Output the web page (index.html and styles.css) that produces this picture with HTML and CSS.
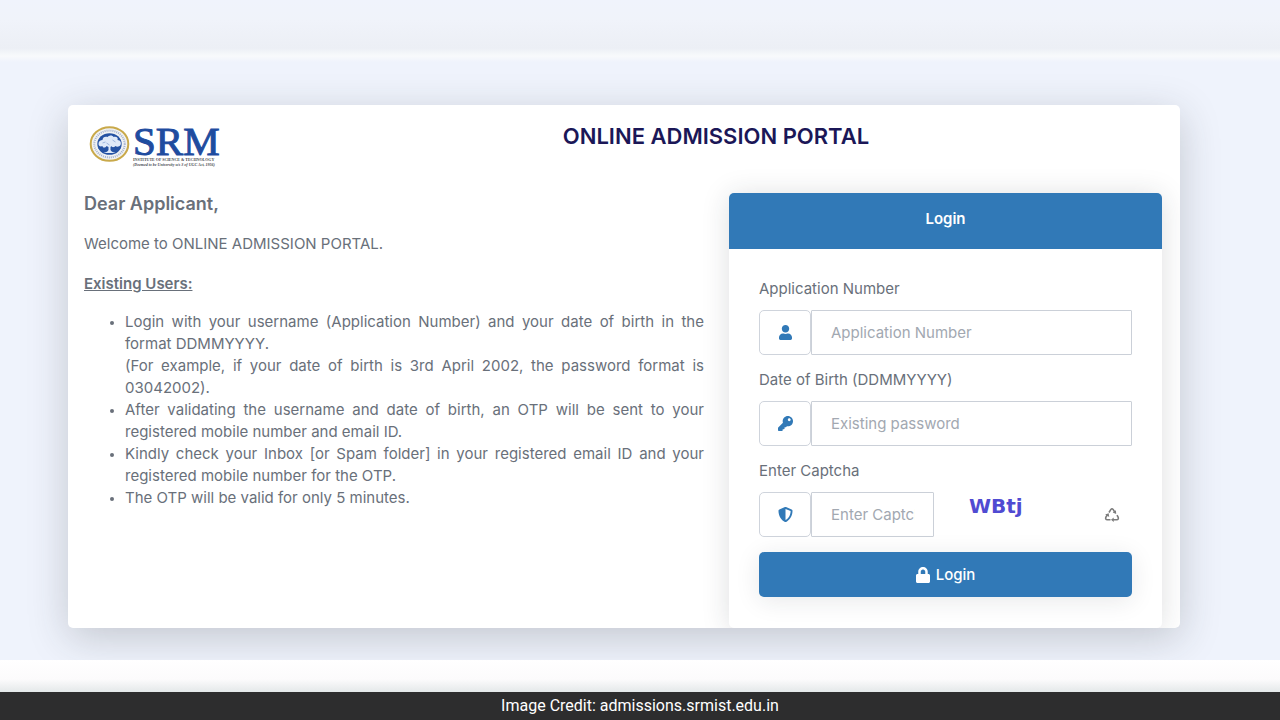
FILE: index.html
```html
<!DOCTYPE html>
<html lang="en">
<head>
    <meta charset="UTF-8">
    <meta name="viewport" content="width=device-width, initial-scale=1.0">
    <title>Online Admission Portal</title>
    <link rel="stylesheet" href="styles.css">
</head>
<body>
<div class="top-strip"></div>
<main class="page">
    <div class="portal">
        <header class="portal-header">
            <div class="logo">
                <svg class="logo-seal" viewBox="0 0 40 36" aria-hidden="true">
                    <ellipse cx="20" cy="18" rx="18.8" ry="16.8" fill="#f1f2f2" stroke="#c9a94a" stroke-width="2"/>
                    <ellipse cx="20" cy="18" rx="15.2" ry="13.4" fill="none" stroke="#a3b1d0" stroke-width="2" stroke-dasharray="1 1"/>
                    <ellipse cx="20" cy="18" rx="12.2" ry="10.8" fill="#2552a3"/>
                    <path d="M9 18c0-3 2-4 4-4 0-3 3-4 5-3 2-2 5-2 6 0 3-1 5 1 4 3 3 0 4 3 3 5-1 2-4 2-5 1-2 2-4 1-4 0l-1 1v3c1 2 3 2 5 3H14c2-1 4-1 5-3v-3l-2-1c-1 2-4 2-4 0-2 1-4 0-4-2z" fill="#dfe9f8"/>
                    <path d="M13 17l3-1m7-2l3 2m-9 1l3 2" fill="none" stroke="#9db5dd" stroke-width="1"/>
                </svg>
                <div class="logo-text">
                    <span class="logo-name">SRM</span>
                    <span class="logo-line">INSTITUTE OF SCIENCE &amp; TECHNOLOGY</span>
                    <span class="logo-line logo-note">(Deemed to be University u/s 3 of UGC Act, 1956)</span>
                </div>
            </div>
            <h1 class="portal-title">ONLINE ADMISSION PORTAL</h1>
        </header>
        <div class="portal-body">
            <section class="info">
                <h2 class="greeting">Dear Applicant,</h2>
                <p class="welcome">Welcome to ONLINE ADMISSION PORTAL.</p>
                <h3 class="info-heading">Existing Users:</h3>
                <ul class="info-list">
                    <li>Login with your username (Application Number) and your date of birth in the format DDMMYYYY.<br>
                        (For example, if your date of birth is 3rd April 2002, the password format is 03042002).</li>
                    <li>After validating the username and date of birth, an OTP will be sent to your registered mobile number and email ID.</li>
                    <li>Kindly check your Inbox [or Spam folder] in your registered email ID and your registered mobile number for the OTP.</li>
                    <li>The OTP will be valid for only 5 minutes.</li>
                </ul>
            </section>
            <section class="login">
                <h2 class="login-header">Login</h2>
                <form class="login-form">
                    <div class="field">
                        <label for="application">Application Number</label>
                        <div class="input-group">
                            <span class="addon">
                                <svg viewBox="0 0 448 512" width="13" height="15" aria-hidden="true"><path fill="currentColor" d="M224 256c70.700 0 128-57.300 128-128S294.700 0 224 0 96 57.300 96 128s57.300 128 128 128zm89.600 32h-16.700c-22.200 10.200-46.900 16-72.900 16s-50.600-5.800-72.900-16h-16.700C60.200 288 0 348.200 0 422.400V464c0 26.500 21.500 48 48 48h352c26.500 0 48-21.500 48-48v-41.600c0-74.200-60.200-134.400-134.400-134.400z"/></svg>
                            </span>
                            <input type="text" id="application" class="input" placeholder="Application Number">
                        </div>
                    </div>
                    <div class="field">
                        <label for="dob">Date of Birth (DDMMYYYY)</label>
                        <div class="input-group">
                            <span class="addon">
                                <svg viewBox="0 0 512 512" width="15" height="15" aria-hidden="true"><path fill="currentColor" d="M512 176c0 97.200-78.800 176-176 176-11.200 0-22.200-1.100-32.800-3.100l-24 27A24 24 0 0 1 261.200 384H224v40c0 13.300-10.700 24-24 24h-40v40c0 13.300-10.700 24-24 24H24c-13.300 0-24-10.700-24-24v-78.100c0-6.400 2.500-12.500 7-17l161.800-161.800C163 213.800 160 195.300 160 176 160 78.800 238.800 0 336 0 433.500 0 512 78.500 512 176zM336 128c0 26.500 21.500 48 48 48s48-21.500 48-48-21.500-48-48-48-48 21.500-48 48z"/></svg>
                            </span>
                            <input type="password" id="dob" class="input" placeholder="Existing password">
                        </div>
                    </div>
                    <div class="field">
                        <label for="captcha">Enter Captcha</label>
                        <div class="captcha-row">
                            <div class="input-group captcha-group">
                                <span class="addon">
                                    <svg viewBox="0 0 512 512" width="15" height="15" aria-hidden="true"><path fill="currentColor" d="M466.500 83.700l-192-80a48 48 0 0 0-36.900 0l-192 80C27.700 91.100 16 108.600 16 128c0 198.500 114.500 335.700 221.500 380.300 11.800 4.900 25.100 4.900 36.900 0C360.100 472.600 496 349.300 496 128c0-19.400-11.700-36.900-29.500-44.300zM256.100 446.300l-.1-381 175.900 73.300c-3.300 151.400-82.100 261.100-175.800 307.700z"/></svg>
                                </span>
                                <input type="text" id="captcha" class="input" placeholder="Enter Captcha">
                            </div>
                            <span class="captcha-code">WBtj</span>
                            <button type="button" class="refresh" aria-label="Refresh captcha">
                                <svg viewBox="0 0 16 16" width="16" height="16" aria-hidden="true">
                                    <path d="M5 5.500L6.900 2.400Q8 1 9.100 2.400L11 5.500M13 8.200l1.200 2.200q.6 2.100-1.500 2.400H9M6.500 12.800H3.300q-2.100-.3-1.500-2.400L3.500 7.500" fill="none" stroke="currentColor" stroke-width="1.600"/>
                                    <path d="M11.900 3.200l.3 3.700-3.500-1.400zM9.700 10.500v4.600L7 12.800zM1.200 7.600l3.500-1.400.5 3.700z" fill="currentColor"/>
                                </svg>
                            </button>
                        </div>
                    </div>
                    <button type="submit" class="submit">
                        <svg viewBox="0 0 448 512" width="14" height="16" aria-hidden="true"><path fill="currentColor" d="M400 224h-24v-72C376 68.200 307.800 0 224 0S72 68.200 72 152v72H48c-26.500 0-48 21.500-48 48v192c0 26.500 21.500 48 48 48h352c26.500 0 48-21.500 48-48V272c0-26.500-21.500-48-48-48zm-104 0H152v-72c0-39.700 32.300-72 72-72s72 32.300 72 72v72z"/></svg>
                        Login
                    </button>
                </form>
            </section>
        </div>
    </div>
</main>
<div class="bottom-strip"></div>
<footer class="credit">Image Credit: admissions.srmist.edu.in</footer>
</body>
</html>
```
FILE: styles.css
```css
* {
    box-sizing: border-box;
    margin: 0;
    padding: 0;
}

body {
    display: flex;
    flex-direction: column;
    min-height: 100vh;
    font-family: Inter, 'Liberation Sans', sans-serif;
    font-size: 15px;
    line-height: 22px;
    color: #69707a;
    background-color: #eff3fc;
}

.top-strip {
    height: 62px;
    background: linear-gradient(#f0f3fc 0, #f0f3fa 20px, #eceff5 48px, #f8fafc 56px, #eff3fc 62px);
}

.page {
    flex: 1;
    padding: 43px 100px 31px 68px;
    overflow: hidden;
}

.portal {
    background-color: #fff;
    border-radius: 5px;
    box-shadow: 0 10px 40px rgba(40, 45, 50, 0.22);
}

.portal-header {
    display: flex;
    padding: 16px;
    height: 88px;
}

.logo {
    display: flex;
    align-items: flex-start;
    gap: 3px;
    width: 151px;
    padding: 5px 0 0 5px;
}

.logo-seal {
    width: 41px;
    height: 36px;
}

.logo-text {
    display: flex;
    flex-direction: column;
    font-family: 'Liberation Serif', serif;
    white-space: nowrap;
}

.logo-name {
    font-size: 41px;
    line-height: 31px;
    color: #1f4c9f;
    -webkit-text-stroke: 1px #1f4c9f;
}

.logo-line {
    font-size: 4px;
    font-weight: bold;
    line-height: 5px;
    color: #4a4a50;
}

.logo-note {
    font-style: italic;
}

.portal-title {
    flex: 1;
    padding-left: 33px;
    font-size: 22px;
    font-weight: 600;
    line-height: 30px;
    text-align: center;
    color: #1b1757;
}

.portal-body {
    display: flex;
    gap: 25px;
    padding: 0 18px 0 16px;
}

.info {
    flex: 620;
}

.greeting {
    margin-bottom: 18px;
    font-size: 18px;
    font-weight: 600;
}

.welcome {
    margin-bottom: 18px;
}

.info-heading {
    margin-bottom: 16px;
    font-size: 15px;
    font-weight: 600;
    text-decoration: underline;
}

.info-list {
    padding-left: 41px;
    text-align: justify;
}

.info-list li::marker {
    font-size: 12px;
}

.login {
    flex: 433;
    background-color: #fff;
    border-radius: 5px;
    box-shadow: 0 2px 28px rgba(33, 40, 50, 0.15);
    clip-path: inset(-40px -18px 0 -40px);
}

.login-header {
    height: 56px;
    font-size: 15px;
    font-weight: 600;
    line-height: 52px;
    text-align: center;
    color: #fff;
    background-color: #3179b7;
    border-radius: 5px 5px 0 0;
}

.login-form {
    display: flex;
    flex-direction: column;
    gap: 15px;
    padding: 30px 30px 31px;
}

.field label {
    display: block;
    margin-bottom: 11px;
    line-height: 20px;
}

.input-group {
    display: flex;
    height: 45px;
}

.addon {
    display: flex;
    flex: none;
    align-items: center;
    justify-content: center;
    width: 52px;
    color: #3179b7;
    border: 1px solid #cfd4dc;
    border-radius: 5px;
}

.input {
    flex: 1;
    min-width: 0;
    padding: 0 18px 0 19px;
    font: inherit;
    color: #69707a;
    background-color: #fff;
    border: 1px solid #cbd0d8;
    border-radius: 1px;
    outline: none;
}

.input::placeholder {
    color: #a2a8b1;
}

.captcha-row {
    display: flex;
    align-items: center;
}

.captcha-group {
    width: 175px;
}

.captcha-code {
    flex: 1;
    padding: 0 0 18px 35px;
    font-family: 'DejaVu Sans', sans-serif;
    font-size: 20px;
    font-weight: bold;
    color: #504bd2;
}

.refresh {
    display: flex;
    margin-right: 12px;
    color: #7c7c7c;
    background: none;
    border: none;
}

.submit {
    display: flex;
    align-items: center;
    justify-content: center;
    gap: 6px;
    height: 45px;
    font: inherit;
    font-weight: 500;
    color: #fff;
    background-color: #3179b7;
    border: none;
    border-radius: 5px;
    box-shadow: 0 4px 24px rgba(33, 40, 50, 0.1);
}

.bottom-strip {
    height: 32px;
    background: linear-gradient(#fff 0, #fcfbfc 60%, #e4e8e9 100%);
}

.credit {
    height: 28px;
    font-family: Roboto, sans-serif;
    font-size: 16px;
    line-height: 28px;
    text-align: center;
    color: #fff;
    background-color: #2d2d2e;
}
```
